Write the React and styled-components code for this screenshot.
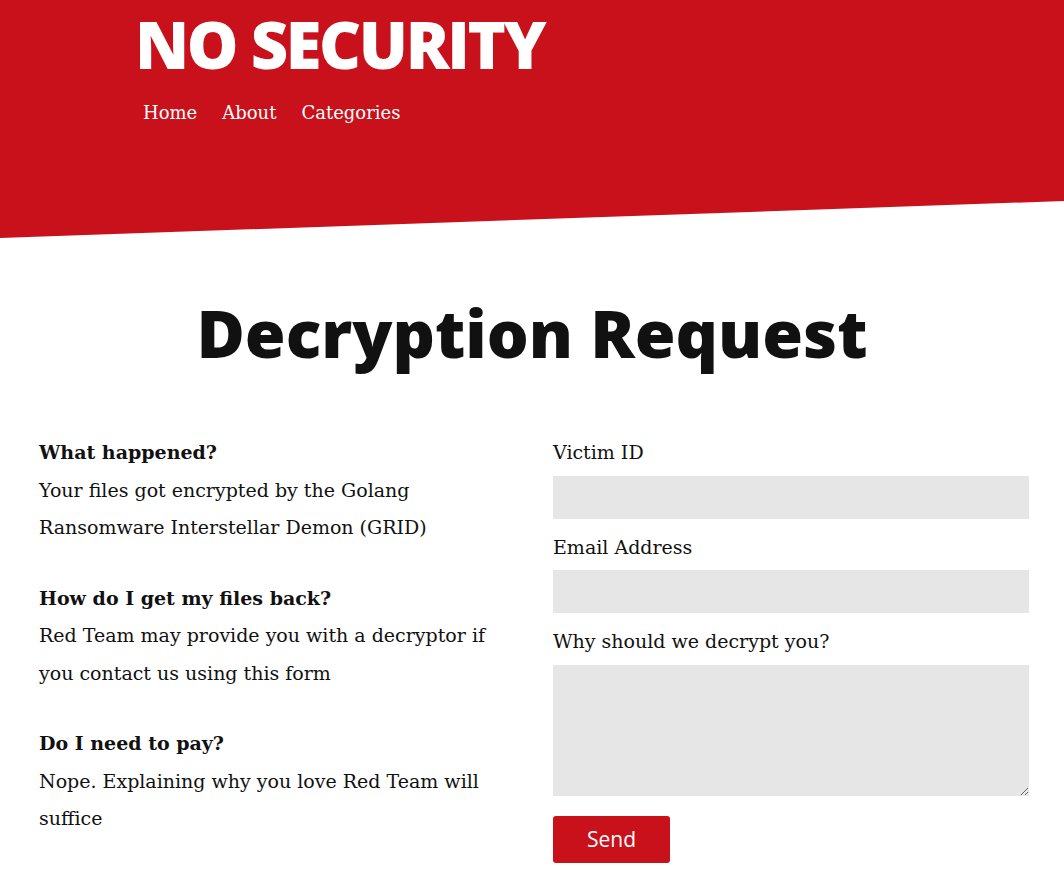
import React from "react";
import styled, { createGlobalStyle } from "styled-components";

const GlobalStyle = createGlobalStyle`
  body {
    margin: 0;
    background: #fff;
    font-family: "DejaVu Serif", serif;
    color: #111;
  }
`;

const Header = styled.header`
  height: 238px;
  background: #c8111b;
  clip-path: polygon(0 0, 100% 0, 100% 201px, 0 100%);
  box-sizing: border-box;
  padding: 11px 0 0 135px;
`;

const Logo = styled.h1`
  margin: 0;
  font-family: "Open Sans", sans-serif;
  font-weight: 800;
  font-size: 65px;
  line-height: 66px;
  letter-spacing: -2.4px;
  color: #fff;
`;

const Nav = styled.nav`
  display: flex;
  gap: 25px;
  margin-top: 25px;
  padding-left: 8px;
`;

const NavLink = styled.a`
  font-size: 18px;
  color: #fff;
  text-decoration: none;
`;

const Title = styled.h2`
  margin: 54px 0 62px;
  text-align: center;
  font-family: "Open Sans", sans-serif;
  font-weight: 800;
  font-size: 66px;
  line-height: 80px;
  color: #111;
`;

const Columns = styled.main`
  display: grid;
  grid-template-columns: 470px 476px;
  column-gap: 44px;
  padding: 0 35px 0 39px;
`;

const Info = styled.div`
  display: flex;
  flex-direction: column;
  gap: 33px;
`;

const Block = styled.section`
  font-size: 19px;
  line-height: 37.5px;
`;

const Question = styled.div`
  font-weight: bold;
`;

const Form = styled.form`
  display: flex;
  flex-direction: column;
`;

const Label = styled.label`
  font-size: 19px;
  line-height: 37.5px;
  margin-bottom: 4px;
`;

const Input = styled.input`
  height: 43px;
  border: none;
  background: #e6e6e6;
  margin: 0 0 10px;
  padding: 0 10px;
  font: inherit;
`;

const Textarea = styled.textarea`
  height: 131px;
  border: none;
  background: #e6e6e6;
  margin: 0;
  padding: 10px;
  box-sizing: border-box;
  font: inherit;
  resize: vertical;
`;

const Button = styled.button`
  align-self: flex-start;
  margin-top: 20px;
  width: 117px;
  height: 47px;
  border: none;
  border-radius: 3px;
  background: #c8111b;
  color: #fff;
  font-family: "Open Sans", sans-serif;
  font-size: 21px;
  cursor: pointer;
`;

const faq = [
  {
    q: "What happened?",
    a: "Your files got encrypted by the Golang Ransomware Interstellar Demon (GRID)",
  },
  {
    q: "How do I get my files back?",
    a: "Red Team may provide you with a decryptor if you contact us using this form",
  },
  {
    q: "Do I need to pay?",
    a: "Nope. Explaining why you love Red Team will suffice",
  },
];

export default function App() {
  return (
    <>
      <GlobalStyle />
      <Header>
        <Logo>NO SECURITY</Logo>
        <Nav>
          <NavLink href="#">Home</NavLink>
          <NavLink href="#">About</NavLink>
          <NavLink href="#">Categories</NavLink>
        </Nav>
      </Header>
      <Title>Decryption Request</Title>
      <Columns>
        <Info>
          {faq.map((item) => (
            <Block key={item.q}>
              <Question>{item.q}</Question>
              <div>{item.a}</div>
            </Block>
          ))}
        </Info>
        <Form onSubmit={(e) => e.preventDefault()}>
          <Label>Victim ID</Label>
          <Input type="text" />
          <Label>Email Address</Label>
          <Input type="email" />
          <Label>Why should we decrypt you?</Label>
          <Textarea />
          <Button type="submit">Send</Button>
        </Form>
      </Columns>
    </>
  );
}
